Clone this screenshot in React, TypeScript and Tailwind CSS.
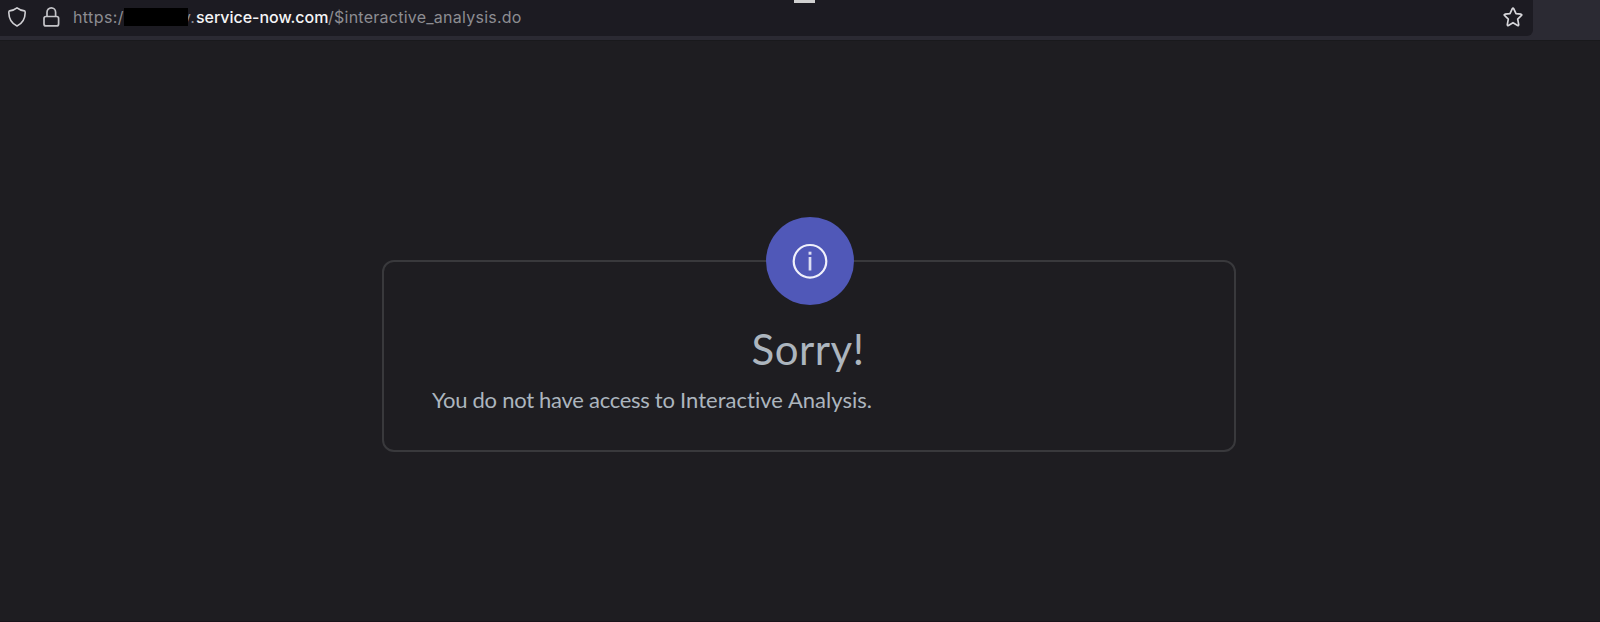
function Shield() {
  return (
    <svg className="h-5 w-[18px] shrink-0" viewBox="0 0 18 20" fill="none" stroke="#d0d0d4" strokeWidth="1.6" strokeLinejoin="round">
      <path d="M9 .9C7 2.6 4.200 3.600 1.500 3.900C.8 4 .8 4.700.8 5.500C.9 12.200 3.500 16.500 9 18.900C14.500 16.500 17.100 12.200 17.200 5.500C17.200 4.700 17.200 4 16.500 3.900C13.800 3.600 11 2.600 9 .9Z" />
    </svg>
  );
}

function Lock() {
  return (
    <svg className="h-5 w-[17px] shrink-0" viewBox="0 0 17 20" fill="none" stroke="#c4c4c8" strokeWidth="1.7">
      <rect x="1" y="9.500" width="14.600" height="9.400" rx="2" />
      <path d="M4 9.500V5.200a4.300 4.300 0 0 1 8.600 0V9.500" />
    </svg>
  );
}

function Star() {
  return (
    <svg className="h-5 w-5" viewBox="0 0 20 20" fill="none" stroke="#d6d6da" strokeWidth="1.7" strokeLinejoin="round">
      <path d="M9.300 1.600Q10 .4 10.700 1.600L13 6.600L18.100 7.200Q19.300 7.500 18.500 8.400L14.700 12.100L15.700 17.600Q15.700 18.900 14.600 18.400L10 15.700L5.400 18.400Q4.300 18.900 4.300 17.600L5.300 12.100L1.500 8.400Q.7 7.500 1.900 7.200L7 6.600Z" />
    </svg>
  );
}

function AddressBar() {
  return (
    <header className="relative h-[41px] border-b border-[#19191c] bg-[#2b2a33]">
      <div className="flex h-9 w-[1533px] items-start rounded-br-md bg-[#1c1b22] pl-2">
        <div className="flex pt-[7px]">
          <Shield />
        </div>
        <div className="ml-[17px] flex pt-[7px]">
          <Lock />
        </div>
        <div className="ml-[13px] flex h-9 items-start whitespace-nowrap pt-[6px] font-['Inter',sans-serif] text-[16px] leading-[23px] text-[#8d8d92]">
          <span className="w-[51px] tracking-[0.4px]">https:/</span>
          <span className="relative z-10 mt-[2px] h-[18px] w-16 bg-black" />
          <span className="-ml-[6px] w-[14px]">v.</span>
          <span className="w-[132px] font-medium tracking-[-0.03px] text-[#f5f5f7]">service-now.com</span>
          <span className="tracking-[0.25px]">/$interactive_analysis.do</span>
        </div>
        <div className="ml-auto mr-[10px] pt-[7px]">
          <Star />
        </div>
      </div>
      <div className="absolute left-[794px] top-0 h-[3px] w-[21px] bg-[#d0d0d0]" />
    </header>
  );
}

export default function App() {
  return (
    <div className="flex h-[622px] w-[1600px] flex-col overflow-hidden border-b border-[#19141b] bg-[#1e1d21]">
      <AddressBar />
      <main className="pl-[382px] pt-[176px] font-['Lato',sans-serif] text-[#acb5be]">
        <div className="flex h-11 w-[854px] justify-center pl-[2px]">
          <div className="relative z-10 flex size-[88px] shrink-0 items-center justify-center rounded-full bg-[#5058b8]">
            <svg className="size-9" viewBox="0 0 36 36" fill="none">
              <circle cx="18" cy="18.300" r="16.300" stroke="#f0f0fb" strokeWidth="2.200" />
              <path d="M18 14v13.500" stroke="#dcdef3" strokeWidth="2.700" />
              <path d="M18 8.700v3" stroke="#dcdef3" strokeWidth="2.900" />
            </svg>
          </div>
        </div>
        <section className="-mt-px h-[192px] w-[854px] rounded-xl border-2 border-[#39393c] px-12 pt-[60px]">
          <h1 className="-ml-[2px] pt-px text-center text-[42px] leading-[52px] tracking-[0.5px]">Sorry!</h1>
          <p className="mt-[10px] text-[22px] leading-[30px] tracking-[-0.28px] [font-variant-ligatures:none]">
            You do not have access to <span className="tracking-[0.03px]">Interactive Analysis.</span>
          </p>
        </section>
      </main>
    </div>
  );
}
